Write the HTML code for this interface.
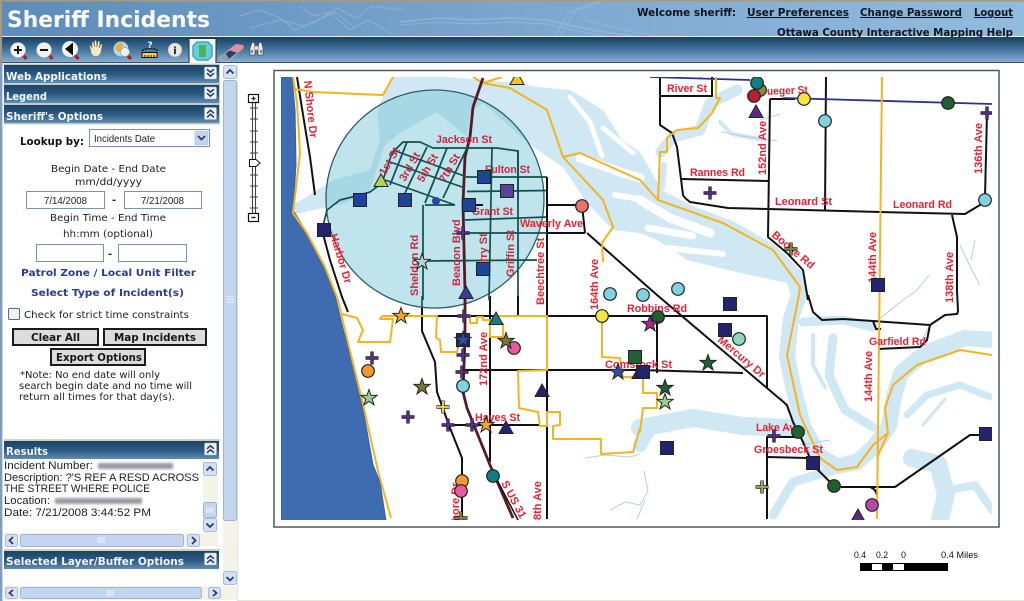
<!DOCTYPE html>
<html lang="en"><head><meta charset="utf-8"><title>Sheriff Incidents</title>
<style>
html,body{margin:0;padding:0;background:#fff;width:1024px;height:601px;overflow:hidden}
svg{display:block}
.v{font-family:"DejaVu Sans",sans-serif}
.vb{font-family:"DejaVu Sans",sans-serif;font-weight:700}
.a{font-family:"Liberation Sans",sans-serif}
.h{font-family:"DejaVu Sans",sans-serif;font-weight:700;font-size:10.5px;fill:#f4f7fa}
.t{font-family:"DejaVu Sans",sans-serif;font-size:10px;fill:#222}
.l{font-family:"Liberation Sans",sans-serif;font-weight:700;font-size:11px;fill:#ee2030}
.c{font-family:"Liberation Sans",sans-serif;font-weight:700;font-size:11px;fill:#c42a42}
.r{font-family:"Liberation Sans",sans-serif;font-size:10.8px;fill:#222}
.rd{fill:none;stroke:#111;stroke-width:2;stroke-linejoin:round}
.gd{fill:none;stroke:#0e4f50;stroke-width:1.7;stroke-linejoin:round}
.ye{fill:none;stroke:#f4b41f;stroke-width:2;stroke-linejoin:round}
.wa{fill:none;stroke:#cfe8f4;stroke-linejoin:round;stroke-linecap:round}
.wh{fill:none;stroke:#fff;stroke-linejoin:round;stroke-linecap:round}
.th{fill:none;stroke:#b7cdea;stroke-width:1}
.sb{fill:#c3d4f0;stroke:#9db4d4;stroke-width:1}
.ar{fill:none;stroke:#2b3f66;stroke-width:1.8}
</style></head><body>
<svg xmlns="http://www.w3.org/2000/svg" width="1024" height="601" viewBox="0 0 1024 601">
<defs>
<linearGradient id="hd" x1="0" x2="1" y1="0" y2="0"><stop offset="0" stop-color="#5c8cb9"/><stop offset=".5" stop-color="#7ba6ce"/><stop offset="1" stop-color="#92bbdf"/></linearGradient>
<linearGradient id="tb" x1="0" x2="0" y1="0" y2="1"><stop offset="0" stop-color="#17405f"/><stop offset=".45" stop-color="#3e6d96"/><stop offset="1" stop-color="#86aed2"/></linearGradient>
<linearGradient id="pn" x1="0" x2="0" y1="0" y2="1"><stop offset="0" stop-color="#1b4467"/><stop offset=".55" stop-color="#2f5c84"/><stop offset="1" stop-color="#5f8db4"/></linearGradient>
<clipPath id="mc"><rect x="281" y="77" width="711" height="443"/></clipPath>
<filter id="bl"><feGaussianBlur stdDeviation="1.4"/></filter>
<g id="st"><polygon points="0,-8.5 2,-2.75 8.1,-2.6 3.2,1.05 5,6.9 0,3.4 -5,6.9 -3.2,1.05 -8.1,-2.6 -2,-2.75" stroke="#222" stroke-width="1"/></g>
<g id="sq"><rect x="-6.5" y="-6.5" width="13" height="13" stroke="#222" stroke-width="1"/></g>
<g id="tr"><polygon points="0,-7 7,5.5 -7,5.5" stroke="#222" stroke-width="1"/></g>
<g id="ci"><circle r="6.3" stroke="#222" stroke-width="1.2"/></g>
<g id="pl" fill="none"><path d="M-6.5 0H6.5M0-6.5V6.5" stroke="#222" stroke-width="3.4"/><path d="M-6 0H6M0-6V6" stroke="currentColor" stroke-width="1.8"/></g>
<g id="chd"><rect x="-6" y="-6" width="12" height="12" rx="1" fill="#eef2f6" stroke="#9fb2c4" stroke-width=".6"/><path d="M-3.5-3.8 0-.8 3.5-3.8M-3.5 .2 0 3.2 3.5 .2" fill="none" stroke="#23395c" stroke-width="1.5"/></g>
<g id="chu"><rect x="-6" y="-6" width="12" height="12" rx="1" fill="#eef2f6" stroke="#9fb2c4" stroke-width=".6"/><path d="M-3.5-.2 0-3.2 3.5-.2M-3.5 3.8 0 .8 3.5 3.8" fill="none" stroke="#23395c" stroke-width="1.5"/></g>
</defs>

<!-- HEADER -->
<rect x="0" y="0" width="1024" height="37" fill="url(#hd)"/>
<g fill="none" stroke="#a8c6e0" stroke-width="1" opacity=".5">
<path d="M240 16l20-6 20 8 15 12 20-8 22-14 20 10 15-12 30 4M250 28l30-8 25 6 30-14 20 16M300 6l14 10 16-4 20 18 18-10 24 14"/>
<path d="M400 22l40-4 30 2 40-2 36 2 46 10 40 6" stroke-width="1.5"/><path d="M400 25l40-3 30 2 40-2 36 2 46 10 40 6"/>
<path d="M555 36l14-24 30-10M560 36l16-26 30-10M585 20l40 10 30 6"/>
</g>
<rect x="0" y="0" width="1024" height="1.5" fill="#a79b7d"/>
<rect x="0" y="0" width="2" height="62" fill="#a79b7d"/>
<rect x="2" y="36" width="1022" height="1" fill="#e6eff7"/>
<text x="7" y="27" class="vb" font-size="22" fill="#fbfcfe" textLength="203" lengthAdjust="spacingAndGlyphs">Sheriff Incidents</text>
<g class="vb" font-size="10.2" fill="#10141c">
<text x="637" y="16" textLength="99" lengthAdjust="spacingAndGlyphs">Welcome sheriff:</text>
<text x="747" y="16" textLength="102" lengthAdjust="spacingAndGlyphs" text-decoration="underline">User Preferences</text>
<text x="860" y="16" textLength="102" lengthAdjust="spacingAndGlyphs" text-decoration="underline">Change Password</text>
<text x="974" y="16" textLength="39" lengthAdjust="spacingAndGlyphs" text-decoration="underline">Logout</text>
<text x="777" y="36" textLength="236" lengthAdjust="spacingAndGlyphs" text-decoration="underline">Ottawa County Interactive Mapping Help</text>
</g>

<!-- TOOLBAR -->
<rect x="0" y="37" width="1024" height="25" fill="url(#tb)"/>
<rect x="0" y="62" width="1024" height="1" fill="#3d4f60"/>
<rect x="0" y="37" width="2" height="26" fill="#9b9a85"/>
<g>
<path d="M22 54l4.500 5" stroke="#c01622" stroke-width="3"/><circle cx="18" cy="50" r="7.500" fill="#f4f5f6" stroke="#bbb" stroke-width=".6"/><path d="M14 50h8M18 46v8" stroke="#111" stroke-width="2"/>
<path d="M48 54l4.500 5" stroke="#c01622" stroke-width="3"/><circle cx="44" cy="50" r="7.500" fill="#eef0f2" stroke="#bbb" stroke-width=".6"/><path d="M40 50h8" stroke="#111" stroke-width="2"/>
<path d="M74 54l4.500 5" stroke="#c01622" stroke-width="3"/><circle cx="70" cy="49" r="8" fill="#f4f5f6"/><path d="M73 42.500v13l-8-6.500z" fill="#0c0c0c"/>
<path d="M91 51c-1-3-2-5-1-6l2 3 0-6 1.500 0 1 5 0-6.500 1.800 0 .7 6.500 1-6 1.800 .5-.5 6.500 1.500-4 1.500 .5-1 6c-.5 3-2 6-5.500 6-3 0-4.300-2.500-5.300-5z" fill="#f3e8c8" stroke="#7a6a4a" stroke-width=".5"/>
<path d="M125 53l6 6" stroke="#b81824" stroke-width="3"/><circle cx="121" cy="49" r="7.500" fill="#b9d8ee"/><path d="M116 45c2-3 6-3 7-1s-2 3-1 5-3 4-5 2-2-4-1-6z" fill="#e5b33c"/><circle cx="125" cy="52" r="4.500" fill="#eaf2f8" stroke="#8aa" stroke-width=".7"/>
<path d="M142 57.500h15v-5h-15z" fill="#f3d35f" stroke="#111"/><path d="M145 57v-2M148 57v-2M151 57v-2M154 57v-2" stroke="#111"/><path d="M142 50.500l5-2h6l5 2" fill="none" stroke="#111" stroke-width="1.300" stroke-dasharray="2 1"/><text x="150" y="48" class="vb" font-size="9" fill="#eee" text-anchor="middle">?</text>
<circle cx="175" cy="50" r="7" fill="#eae7dc" stroke="#999" stroke-width=".6"/><text x="175" y="54" class="vb" font-size="10" fill="#111" text-anchor="middle">i</text>
<rect x="189" y="38.500" width="27" height="25" fill="#f3f5f4" stroke="#20303c"/>
<polygon points="197,42 208,42 212,46 212,56 208,60 197,60 193,56 193,46" fill="#66cede" stroke="#3caabb" stroke-width="1.500"/><rect x="199" y="45" width="7" height="12" fill="#4cb35a"/>
<path d="M219 58l17-13 7 3-17 14z" fill="#2a3f5e" stroke="#ddd" stroke-width=".6"/><path d="M228 50l8-6 7 1 1 3-6 5z" fill="#e38fa0"/><path d="M219 58l6-5 4 5-3 4z" fill="#8aa0b8"/>
<path d="M252 42.500h2.500l.5 5v7.500h-5v-7zM259 42.500h2.500l1.500 5.500v7h-5v-7.500z" fill="#e8e8e4" stroke="#334" stroke-width=".6"/><rect x="255" y="46" width="3" height="4" fill="#cfd6dc"/><path d="M252 50v3M261 50v3" stroke="#445" stroke-width="1.200"/>
</g>

<!-- SIDEBAR -->
<rect x="0" y="63" width="238" height="538" fill="#fff"/>
<rect x="0" y="63" width="2" height="538" fill="#7e9dc4"/>
<rect x="2" y="63" width="1" height="538" fill="#d9d9c8"/>
<rect x="237" y="63" width="1" height="538" fill="#dfe4e6"/>
<rect x="4" y="63.500" width="216" height="61" fill="#c9c9c2"/>
<rect x="4" y="65" width="215" height="18" fill="url(#pn)"/>
<rect x="4" y="85" width="215" height="18" fill="url(#pn)"/>
<rect x="4" y="105" width="215" height="18" fill="url(#pn)"/>
<text x="6" y="80" class="h" textLength="101" lengthAdjust="spacingAndGlyphs">Web Applications</text>
<text x="6" y="100" class="h" textLength="41" lengthAdjust="spacingAndGlyphs">Legend</text>
<text x="6" y="120" class="h" textLength="97" lengthAdjust="spacingAndGlyphs">Sheriff's Options</text>
<use href="#chd" x="210.500" y="73"/><use href="#chd" x="210.500" y="93"/><use href="#chu" x="210.500" y="113.500"/>

<!-- outer scrollbar -->
<rect x="223.500" y="65.500" width="13" height="13" rx="2" fill="#d5e0f4" stroke="#a9bdd8"/><path d="M226.500 73.500l3.500-3.500 3.500 3.500" class="ar"/>
<rect x="223.500" y="80.500" width="13" height="440" rx="2" class="sb"/><path d="M226 297h8M226 299.500h8M226 302h8" stroke="#eef3fb"/>
<rect x="223" y="521" width="14" height="50" fill="#f4f4ea"/>
<rect x="223.500" y="571.500" width="13" height="13" rx="2" fill="#d5e0f4" stroke="#a9bdd8"/><path d="M226.500 577l3.500 3.500 3.500-3.500" class="ar"/>

<!-- form -->
<text x="20" y="145" class="vb" font-size="10.500" fill="#111" textLength="64" lengthAdjust="spacingAndGlyphs">Lookup by:</text>
<rect x="89.500" y="129.500" width="120" height="17" fill="#fff" stroke="#7794b4"/>
<text x="94" y="142" class="a" font-size="10.500" fill="#222" textLength="61" lengthAdjust="spacingAndGlyphs">Incidents Date</text>
<rect x="195" y="131" width="13" height="14" rx="1.500" fill="#c4d4ee" stroke="#a8bcd8" stroke-width=".6"/><path d="M198 136l3.500 3.500 3.500-3.500" class="ar"/>
<text x="51" y="172" class="t" textLength="115" lengthAdjust="spacingAndGlyphs">Begin Date - End Date</text>
<text x="75" y="185" class="t" textLength="67" lengthAdjust="spacingAndGlyphs">mm/dd/yyyy</text>
<rect x="26.500" y="191.500" width="78" height="17" fill="#fff" stroke="#7794b4"/>
<rect x="124.500" y="191.500" width="77" height="17" fill="#fff" stroke="#7794b4"/>
<text x="44" y="204" class="a" font-size="10.500" fill="#222" textLength="43" lengthAdjust="spacingAndGlyphs">7/14/2008</text>
<text x="141" y="204" class="a" font-size="10.500" fill="#222" textLength="43" lengthAdjust="spacingAndGlyphs">7/21/2008</text>
<text x="112" y="203" class="vb" font-size="10" fill="#222">-</text>
<text x="50" y="221" class="t" textLength="116" lengthAdjust="spacingAndGlyphs">Begin Time - End Time</text>
<text x="63" y="237" class="t" textLength="90" lengthAdjust="spacingAndGlyphs">hh:mm (optional)</text>
<rect x="36.500" y="244.500" width="67" height="17" fill="#fff" stroke="#7794b4"/>
<rect x="118.500" y="244.500" width="68" height="17" fill="#fff" stroke="#7794b4"/>
<text x="108" y="257" class="vb" font-size="10" fill="#222">-</text>
<text x="21" y="276" class="vb" font-size="10" fill="#2b3a92" textLength="175" lengthAdjust="spacingAndGlyphs">Patrol Zone / Local Unit Filter</text>
<text x="31" y="296" class="vb" font-size="10" fill="#2b3a92" textLength="153" lengthAdjust="spacingAndGlyphs">Select Type of Incident(s)</text>
<rect x="8.500" y="308.500" width="11" height="11" rx="1" fill="#f2f2ee" stroke="#4f6b96"/>
<text x="24" y="318" class="t" textLength="165" lengthAdjust="spacingAndGlyphs">Check for strict time constraints</text>
<g fill="#dcdcdc" stroke="#1b1b1b" stroke-width="2">
<rect x="13" y="329" width="85" height="16"/><rect x="104" y="329" width="102" height="16"/><rect x="51" y="349" width="94" height="16"/>
</g>
<g class="vb" font-size="10.200" fill="#15151c">
<text x="31" y="341" textLength="49" lengthAdjust="spacingAndGlyphs">Clear All</text>
<text x="114" y="341" textLength="82" lengthAdjust="spacingAndGlyphs">Map Incidents</text>
<text x="56" y="361" textLength="86" lengthAdjust="spacingAndGlyphs">Export Options</text>
</g>
<g class="v" font-size="9.500" fill="#1c1c2a">
<text x="20" y="378" textLength="140" lengthAdjust="spacingAndGlyphs">*Note: No end date will only</text>
<text x="19" y="389" textLength="173" lengthAdjust="spacingAndGlyphs">search begin date and no time will</text>
<text x="19" y="400" textLength="156" lengthAdjust="spacingAndGlyphs">return all times for that day(s).</text>
</g>

<!-- Results -->
<rect x="4" y="439" width="216" height="2" fill="#d0d0c8"/>
<rect x="4" y="441" width="215" height="18" fill="url(#pn)"/>
<text x="6" y="455" class="h" textLength="42" lengthAdjust="spacingAndGlyphs">Results</text>
<use href="#chu" x="210.500" y="449"/>
<text x="4" y="469" class="r" textLength="89" lengthAdjust="spacingAndGlyphs">Incident Number:</text>
<text x="4" y="481" class="r" textLength="195" lengthAdjust="spacingAndGlyphs">Description: ?'S REF A RESD ACROSS</text>
<text x="4" y="492" class="r" textLength="146" lengthAdjust="spacingAndGlyphs">THE STREET WHERE POLICE</text>
<text x="4" y="504" class="r" textLength="46" lengthAdjust="spacingAndGlyphs">Location:</text>
<text x="4" y="516" class="r" textLength="147" lengthAdjust="spacingAndGlyphs">Date: 7/21/2008 3:44:52 PM</text>
<g filter="url(#bl)" fill="#9a9aa2"><rect x="98" y="463" width="75" height="6"/><rect x="55" y="498" width="87" height="6"/></g>
<rect x="203" y="462" width="15" height="84" fill="#f3f3e8"/>
<rect x="203.500" y="462.500" width="13" height="13" rx="2" fill="#d5e0f4" stroke="#a9bdd8"/><path d="M206.500 470.500l3.500-3.500 3.500 3.500" class="ar"/>
<rect x="203.500" y="502.500" width="13" height="15" rx="2" class="sb"/><path d="M206 508h8M206 510h8M206 512h8" stroke="#eef3fb"/>
<rect x="203.500" y="518.500" width="13" height="13" rx="2" fill="#d5e0f4" stroke="#a9bdd8"/><path d="M206.500 523.500l3.500 3.500 3.500-3.500" class="ar"/>
<rect x="4" y="533" width="214" height="13" fill="#f3f3e8"/>
<rect x="5.500" y="534.500" width="12" height="12" rx="2" fill="#d5e0f4" stroke="#a9bdd8"/><path d="M13 537l-3.500 3.500 3.500 3.500" class="ar"/>
<rect x="20.500" y="534.500" width="163" height="12" rx="2" class="sb"/><path d="M98 537v6M100 537v6M102 537v6M104 537v6" stroke="#eef3fb"/>
<rect x="187.500" y="534.500" width="12" height="12" rx="2" fill="#d5e0f4" stroke="#a9bdd8"/><path d="M192 537l3.500 3.500-3.500 3.500" class="ar"/>

<rect x="4" y="549" width="216" height="2" fill="#d0d0c8"/>
<rect x="4" y="551" width="215" height="18" fill="url(#pn)"/>
<text x="6" y="565" class="h" textLength="178" lengthAdjust="spacingAndGlyphs">Selected Layer/Buffer Options</text>
<use href="#chu" x="210.500" y="559"/>

<!-- bottom scrollbar -->
<rect x="3" y="586" width="234" height="14" fill="#f3f3e8"/>
<rect x="5.500" y="587.500" width="12" height="11" rx="2" fill="#d5e0f4" stroke="#a9bdd8"/><path d="M13 590l-3.500 3 3.500 3" class="ar"/>
<rect x="20.500" y="587.500" width="181" height="11" rx="2" class="sb"/><path d="M107 590v6M109 590v6M111 590v6M113 590v6" stroke="#eef3fb"/>
<rect x="208.500" y="587.500" width="12" height="11" rx="2" fill="#d5e0f4" stroke="#a9bdd8"/><path d="M213 590l3.500 3-3.500 3" class="ar"/>
<rect x="238" y="600" width="786" height="1" fill="#e8e8d2"/>

<!-- ZOOM SLIDER -->
<g fill="none" stroke="#444">
<path d="M252.500 102V213M255.500 102V213" stroke-width="1.100"/>
<path d="M250 108h8M250 119h8M250 131h8M250 142h8M250 153h8M250 175h8M250 186h8M250 197h8M250 208h8"/>
</g>
<rect x="248.500" y="94.500" width="10" height="8" fill="#fff" stroke="#111" stroke-width="1.200"/><path d="M251.500 98.500h4M253.500 96.500v4" stroke="#111" stroke-width="1.200"/>
<rect x="248.500" y="213.500" width="10" height="8" fill="#fff" stroke="#111" stroke-width="1.200"/><path d="M251.500 217.500h4" stroke="#111" stroke-width="1.400"/>
<polygon points="249.500,159.500 256,159.500 260,163 256,166.500 249.500,166.500" fill="#fff" stroke="#111"/>

<!-- MAP -->
<rect x="274" y="70.500" width="725" height="456.500" fill="#fff" stroke="#4f5b55" stroke-width="1.500"/>
<g clip-path="url(#mc)">
<!-- water -->
<polygon fill="#cfe8f4" points="385,90 393,77 450,77 480,80 517,83 537,87 570,90 603,110 622,140 640,152 662,190 690,205 735,222 775,245 802,272 808,300 792,300 787,283 740,273 687,260 673,250 657,240 640,233 613,230 587,203 563,167 533,147 483,103 470,113 467,137 437,112 400,133 385,145 378,165 370,190 345,203 296,214 293,205 333,180 370,170 380,140 377,113"/>
<g class="wh">
<path d="M570 97l20 25 12 34" stroke-width="5"/><path d="M603 128l30 25" stroke-width="5"/><path d="M580 158l43 15 17 5" stroke-width="9"/><path d="M615 195l25 4" stroke-width="6"/>
<path d="M640 200l30 18 40 15" stroke-width="9"/><path d="M648 228l45 8" stroke-width="7"/><path d="M668 248l55 6" stroke-width="6"/>
</g>
<g class="wa">
<path d="M661 152l12-15 27-7 10-27 27-13" stroke-width="11"/><path d="M664 165l-2 22" stroke-width="6"/><path d="M720 122l12 12 32 6" stroke-width="4"/>
<path d="M799 295l-8 23-4 38 6 30 10 40 16 30 18 10 20-4 16-14 16-22 5-30 7-23 24-20 40-15 30 2" stroke-width="16"/>
<path d="M803 322l40-2 30 7" stroke-width="9"/>
<path d="M833 338l-4 38 16 34 28 17" stroke-width="9"/>
<path d="M813 335v30l12 22" stroke-width="4"/>
<path d="M907 415l20-20 33-10 30 12" stroke-width="7"/>
<path d="M945 399l-22 26" stroke-width="3"/>
<path d="M912 458l26 6 8 30-6 26" stroke-width="18"/>
<path d="M950 490l25-5 17 25" stroke-width="8"/>
<path d="M773 515l20-33 47-14" stroke-width="9"/>
<path d="M640 428l53-10 50 8 44 2" stroke-width="18"/><path d="M640 445l8-14" stroke-width="14"/>
</g>
<g class="th">
<path d="M760 120l20-6M722 132l20 4 35 5M960 245l12 25 8 15M975 240l-4 20M878 320l25-20 14-10 12-15"/>
<path d="M585 458l20-3 25 2 10-3M610 510l15-8 15 3 8-14-4-20M645 500l-8 19M930 325l-8 15M790 415l-10-20M800 445l30-5"/>
</g>
<!-- bay -->
<polygon fill="#3f6cb0" stroke="#2a60b8" stroke-width="1" points="281,77 292,77 295,110 296,165 293,210 307,233 320,257 332,287 335,295 342,325 360,392 373,465 380,482 386,521 281,521"/>
<!-- black roads outside circle -->
<g class="rd">
<path d="M297 77l8 50 5 30 5 38"/><path d="M322 230l8 30 12 37 6 15"/>
<path d="M436 316H640 767V388"/><path d="M422 296v35l13 31 2 30 13 36 12 30v60"/>
<path d="M490 296V462"/><path d="M518 296v20"/><path d="M547 177V519"/>
<path d="M462 370H640L743 373"/><path d="M443 425H540"/>
<path d="M587 233l53 47 17 15 130 110 6 17 10 20 10 23 22 22"/>
<path d="M546 205H582l3 28M546 233h39"/>
<path d="M767 519V437h30M768 457l39 1M835 487h60l75-52h17"/><path d="M870 487q6 2 7 8"/>
<path d="M657 317v56"/>
<path d="M808 295l5 17 9 8 21-1 30 2 57 4 15-10 12-1 1-3-1-20V237l-5-22"/><path d="M878 349l42-2 7-7 3-15"/><path d="M873 321l3 8h5"/>
<path d="M685 198l5 4 38 6 40 1 112 3 85 2 20-12"/>
<path d="M660 77v48l12 8 5 14 6 48 2 3"/><path d="M660 96h52V77"/><path d="M682 179l86 2"/>
<path d="M770 99l-2 138 19 16 16 17 5 30"/><path d="M770 99h25"/>
<path d="M826 77l-1 133"/><path d="M987 113l-2 84"/>
</g>
<!-- blue road -->
<path d="M783 98l209 6M650 77l100 3" fill="none" stroke="#2c3192" stroke-width="1.800"/>
<path d="M700 77q9-6 14 0" fill="none" stroke="#111" stroke-width="1.500"/>
<!-- yellow lines -->
<g class="ye">
<path d="M882 77l-5 442"/>
<path d="M295 89l18 3 70 3 10-18"/><path d="M473 77l10 6 19-6"/>
<path d="M293 77l4 26 3 50-7 60 14 20 18 34 13 33 5 22 20 82 15 67 13 47"/>
<path d="M483 83l27 5 37 22 16 47 40 43 10 27-11 16 1 19"/><path d="M563 157l17-4 60 27 18 20 65 23 50 27 27 37-1 8-12 60 13 60 20 43 17 12 20-3 16-22 15-12-3-25 8-23 24-20 43-15 32 5"/>
<path d="M888 433l-11 25"/>
<path d="M716 77v21h4l-8 15-14 15-21 2-10 8v14h-7l-2 47"/>
<path d="M342 314l15 4 6 12-5 12h32l3-23h-13l2-3h55l-1 22 4 2 1 12h16l3-14"/>
<path d="M470 323v-8m0 8h7v-6h6v3h7v17h13v-13h-13M497 316h50v54l-29 1 1 37 19 4 2 14h7v-14h13v13l-7 1v13h48v15l32-2 7-24"/>
<path d="M640 432l3-24h14v-15h-14v-15"/>
<path d="M602 315v42l18 1 3 19h20"/>
</g>
<!-- circle buffer -->
<circle cx="435" cy="199" r="109" fill="#74c4d4" fill-opacity=".46" stroke="#2a5f66" stroke-width="1.300"/>
<!-- highway -->
<path d="M483 78l-10 29-3 30-5 20-2 46 2 89v46l-2 54 4 16 23 57 23 53" fill="none" stroke="#5a1826" stroke-width="2.800"/>
<path d="M496 478l22 42" fill="none" stroke="#111" stroke-width="1.500"/>
<!-- streets in circle -->
<g class="gd">
<path d="M322 230l5-20 13-10 20-5 10-3 12-9 10-30 11-11h17l13 6h64l21 3v50"/>
<path d="M407 142l-17 43M427 147l-22 46M447 148l-22 55M467 148l-24 50"/>
<path d="M393 150l74 27M390 162l75 26M385 180l70 25M425 205h30"/>
<path d="M467 177h80M467 191.500l80-1M465 220l82-3M465 233h82M422 261l115-1"/>
<path d="M423 205v95M492 148l-3 152M518 150V296"/>
</g>
<path d="M547 177v55M467 205h16" class="rd" stroke-width="1.800"/>
<!-- labels in circle -->
<text class="c" x="436" y="143" textLength="56" lengthAdjust="spacingAndGlyphs">Jackson St</text>
<text class="c" transform="translate(385,176) rotate(-60)">1st St</text>
<text class="c" transform="translate(405,182) rotate(-60)">3rd St</text>
<text class="c" transform="translate(423,183) rotate(-60)">5th St</text>
<text class="c" transform="translate(445,183) rotate(-60)">7th St</text>
<text class="c" x="485" y="173" textLength="45" lengthAdjust="spacingAndGlyphs">Fulton St</text>
<text class="c" x="472" y="215" textLength="41" lengthAdjust="spacingAndGlyphs">Grant St</text>
<text class="c" transform="translate(418,296) rotate(-90)">Sheldon Rd</text>
<text class="c" transform="translate(460,286) rotate(-90)">Beacon Blvd</text>
<text class="c" transform="translate(487,262) rotate(-90)">rry St</text>
<text class="c" transform="translate(514,277) rotate(-90)">Griffin St</text>
<!-- labels -->
<g>
<text class="l" transform="translate(304,81) rotate(84)">N Shore Dr</text>
<text class="l" x="520" y="227" textLength="63" lengthAdjust="spacingAndGlyphs">Waverly Ave</text>
<text class="l" transform="translate(330,235) rotate(73)">Harbor Dr</text>
<text class="l" transform="translate(544,305) rotate(-90)">Beechtree St</text>
<text class="l" transform="translate(598,310) rotate(-90)">164th Ave</text>
<text class="l" transform="translate(766,175) rotate(-90)">152nd Ave</text>
<text class="l" x="667" y="92" textLength="40" lengthAdjust="spacingAndGlyphs">River St</text>
<text class="l" transform="translate(763,95) rotate(-2)" textLength="45" lengthAdjust="spacingAndGlyphs">rueger St</text>
<text class="l" x="690" y="176" textLength="55" lengthAdjust="spacingAndGlyphs">Rannes Rd</text>
<text class="l" x="775" y="205" textLength="57" lengthAdjust="spacingAndGlyphs">Leonard St</text>
<text class="l" x="893" y="208" textLength="59" lengthAdjust="spacingAndGlyphs">Leonard Rd</text>
<text class="l" transform="translate(771,236) rotate(40)">Boone Rd</text>
<text class="l" transform="translate(982,174) rotate(-90)">136th Ave</text>
<text class="l" transform="translate(876,283) rotate(-90)">144th Ave</text>
<text class="l" transform="translate(953,303) rotate(-90)">138th Ave</text>
<text class="l" transform="translate(487,386) rotate(-90)">172nd Ave</text>
<text class="l" x="627" y="312" textLength="60" lengthAdjust="spacingAndGlyphs">Robbins Rd</text>
<text class="l" transform="translate(717,341) rotate(40)">Mercury Dr</text>
<text class="l" x="869" y="345" textLength="57" lengthAdjust="spacingAndGlyphs">Garfield Rd</text>
<text class="l" x="605" y="368" textLength="67" lengthAdjust="spacingAndGlyphs">Comstock St</text>
<text class="l" transform="translate(872,402) rotate(-90)">144th Ave</text>
<text class="l" x="756" y="431" textLength="45" lengthAdjust="spacingAndGlyphs">Lake Ave</text>
<text class="l" x="754" y="453" textLength="69" lengthAdjust="spacingAndGlyphs">Groesbeck St</text>
<text class="l" x="475" y="421" textLength="45" lengthAdjust="spacingAndGlyphs">Hayes St</text>
<text class="l" transform="translate(501,483) rotate(62)">S US 31</text>
<text class="l" transform="translate(459,529) rotate(-90)">Shore Dr</text>
<text class="l" transform="translate(541,520) rotate(-90)">8th Ave</text>
</g>
<!-- symbols -->
<use href="#tr" x="517" y="79" fill="#f5c518"/>
<use href="#sq" x="360" y="200" fill="#1f4496"/><use href="#sq" x="405" y="200" fill="#1f4496"/><use href="#sq" x="469" y="205" fill="#1f4496"/><use href="#sq" x="484" y="177" fill="#1f4496"/><use href="#sq" x="507" y="191" fill="#55449a"/><use href="#sq" x="483" y="269" fill="#1f4496"/><use href="#sq" x="324" y="230" fill="#24246e"/>
<circle cx="436" cy="201" r="4" fill="#2f45a8"/>
<use href="#tr" x="381" y="181" fill="#b5cf5a"/><use href="#st" x="422" y="262" fill="#a8d8d8"/>
<use href="#pl" x="463" y="233" color="#5a2d8c"/><use href="#tr" x="466" y="293" fill="#3f3a92"/>
<use href="#ci" x="582" y="206" fill="#e8736a"/>
<use href="#ci" x="610" y="294" fill="#7fd3e0"/><use href="#ci" x="643" y="295" fill="#7fd3e0"/><use href="#ci" x="678" y="289" fill="#7fd3e0"/>
<use href="#ci" x="760" y="90" fill="#8a8a3a"/><use href="#ci" x="757" y="83" fill="#0f8080"/><use href="#ci" x="754" y="96" fill="#b5202a"/><use href="#tr" x="756" y="112" fill="#5a2a8a"/>
<use href="#ci" x="804" y="99" fill="#f5e642"/><use href="#ci" x="948" y="103" fill="#1f5f30"/><use href="#pl" x="987" y="113" color="#5a2d8c"/>
<use href="#ci" x="825" y="121" fill="#7fd3e0"/><use href="#ci" x="985" y="200" fill="#7fd3e0"/>
<use href="#pl" x="710" y="193" color="#5a2d8c"/><use href="#pl" x="791" y="249" color="#8a8a3a"/><use href="#sq" x="878" y="285" fill="#24246e"/>
<use href="#st" x="401" y="316" fill="#f5a32a"/><use href="#pl" x="464" y="316" color="#5a2d8c"/><use href="#tr" x="496" y="319" fill="#118080"/>
<use href="#sq" x="463" y="340" fill="#1c2c66"/><use href="#st" x="463" y="340" fill="#2f4fb0"/>
<use href="#ci" x="514" y="348" fill="#e85aa0"/><use href="#st" x="506" y="341" fill="#77773a"/>
<use href="#pl" x="463" y="355" color="#5a2d8c"/><use href="#pl" x="462" y="372" color="#5a2d8c"/><use href="#ci" x="463" y="386" fill="#7fd3e0"/>
<use href="#pl" x="372" y="358" color="#5a2d8c"/><use href="#ci" x="368" y="371" fill="#f59a28"/><use href="#st" x="422" y="387" fill="#77773a"/><use href="#st" x="369" y="398" fill="#92d28c"/>
<use href="#pl" x="443" y="407" color="#f5e642"/><use href="#pl" x="408" y="417" color="#5a2d8c"/><use href="#pl" x="448" y="425" color="#5a2d8c"/><use href="#pl" x="472" y="425" color="#5a2d8c"/>
<use href="#st" x="486" y="425" fill="#f5a32a"/><use href="#tr" x="506" y="428" fill="#24246e"/><use href="#tr" x="542" y="391" fill="#24246e"/>
<use href="#ci" x="602" y="316" fill="#f5e642"/><use href="#ci" x="493" y="476" fill="#0f8080"/><use href="#ci" x="462" y="481" fill="#f59a28"/><use href="#ci" x="461" y="491" fill="#e85aa0"/><use href="#pl" x="461" y="518" color="#8a8a3a"/>
<use href="#sq" x="635" y="357" fill="#1f6035"/><use href="#st" x="618" y="372" fill="#2f4fb0"/><use href="#tr" x="639" y="373" fill="#24246e"/>
<use href="#ci" x="658" y="317" fill="#1f5f30"/><use href="#st" x="650" y="324" fill="#a02a90"/><use href="#sq" x="730" y="304" fill="#24246e"/><use href="#sq" x="725" y="330" fill="#24246e"/><use href="#ci" x="739" y="339" fill="#8fd8c0"/>
<use href="#st" x="708" y="363" fill="#1f6035"/><use href="#sq" x="643" y="372" fill="#24246e"/><use href="#st" x="665" y="388" fill="#1f6035"/><use href="#st" x="665" y="402" fill="#92d28c"/><use href="#sq" x="667" y="448" fill="#24246e"/>
<use href="#pl" x="774" y="436" color="#5a2d8c"/><use href="#ci" x="798" y="432" fill="#1f5f30"/><use href="#sq" x="813" y="463" fill="#24246e"/><use href="#ci" x="834" y="486" fill="#1f5f30"/><use href="#pl" x="762" y="487" color="#b0b050"/>
<use href="#sq" x="986" y="434" fill="#24246e"/><use href="#ci" x="872" y="505" fill="#b44aa8"/><use href="#tr" x="858" y="516" fill="#5a2a8a"/>
</g>

<!-- SCALE -->
<g class="a" font-size="9" fill="#111">
<text x="854" y="558" textLength="12" lengthAdjust="spacingAndGlyphs">0.4</text><text x="876" y="558" textLength="12" lengthAdjust="spacingAndGlyphs">0.2</text><text x="901" y="558">0</text><text x="941" y="558" textLength="37" lengthAdjust="spacingAndGlyphs">0.4 Miles</text>
</g>
<rect x="860" y="563" width="88" height="8" fill="#000"/>
<rect x="872" y="564" width="10" height="6" fill="#fff"/><rect x="893" y="564" width="11" height="6" fill="#fff"/>
</svg>
</body></html>
